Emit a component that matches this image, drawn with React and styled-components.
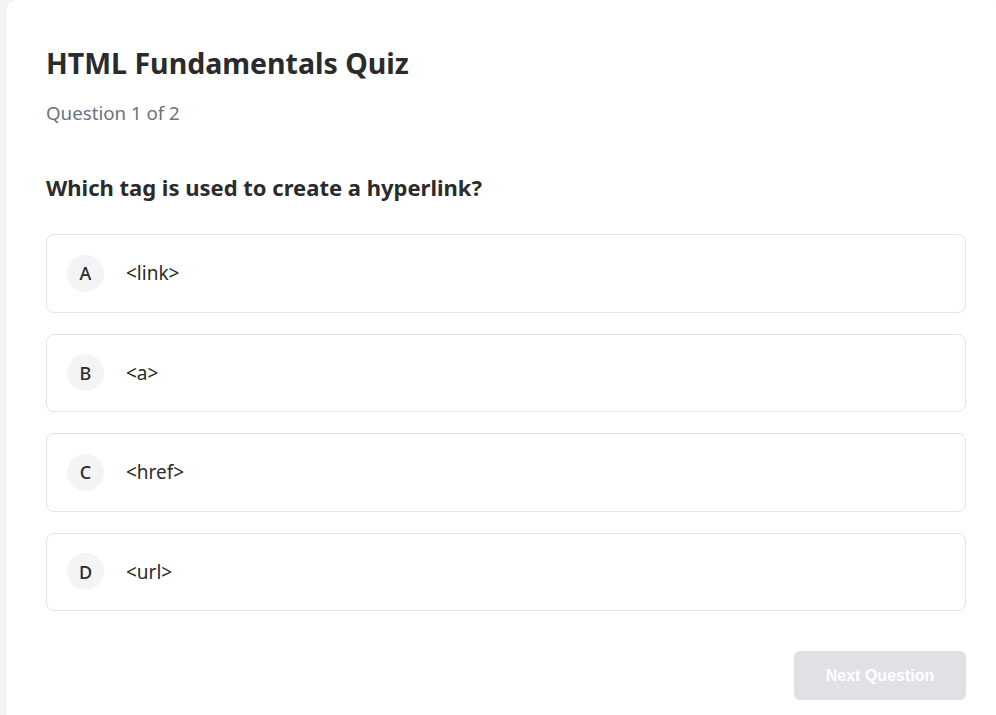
import styled, { createGlobalStyle } from 'styled-components';

const GlobalStyle = createGlobalStyle`
  html, body {
    margin: 0;
    padding: 0;
    background: #f3f4f6;
    overflow: hidden;
  }
  body {
    font-family: "Noto Sans", "Open Sans", sans-serif;
    color: #2d2d2d;
  }
`;

const Page = styled.div`
  padding-left: 6px;
  min-height: 715px;
`;

const Card = styled.div`
  width: 1000px;
  min-height: 715px;
  box-sizing: border-box;
  background: #ffffff;
  border-radius: 12px;
  padding: 45px 40px 40px 40px;
  box-shadow: 0 1px 3px rgba(0, 0, 0, 0.06);
`;

const Title = styled.h1`
  margin: 0;
  font-size: 28.5px;
  font-weight: 700;
  line-height: 1.3;
  color: #2b2b2b;
`;

const Counter = styled.p`
  margin: 18px 0 0;
  font-size: 18.7px;
  color: #6b7280;
`;

const Question = styled.h2`
  margin: 47px 0 0;
  font-size: 22px;
  font-weight: 700;
  color: #2b2b2b;
`;

const Options = styled.div`
  display: flex;
  flex-direction: column;
  gap: 21px;
  margin-top: 32px;
`;

const Option = styled.button`
  display: flex;
  align-items: center;
  gap: 22px;
  width: 100%;
  padding: 19.75px 20px;
  background: #ffffff;
  border: 1px solid #e2e4e8;
  border-radius: 8px;
  font-family: inherit;
  font-size: 19px;
  color: #2b2b2b;
  text-align: left;
  cursor: pointer;
`;

const Letter = styled.span`
  display: flex;
  align-items: center;
  justify-content: center;
  width: 37px;
  height: 37px;
  border-radius: 50%;
  background: #f3f4f6;
  font-weight: 500;
  font-size: 18px;
`;

const Footer = styled.div`
  display: flex;
  justify-content: flex-end;
  margin-top: 40px;
`;

const NextButton = styled.button`
  width: 172px;
  height: 49px;
  border: none;
  border-radius: 6px;
  background: #dfe1e5;
  color: #ffffff;
  font-family: "Liberation Sans", Arial, sans-serif;
  font-weight: 700;
  font-size: 16px;
  cursor: not-allowed;
`;

const options = [
  { key: 'A', text: '<link>' },
  { key: 'B', text: '<a>' },
  { key: 'C', text: '<href>' },
  { key: 'D', text: '<url>' },
];

const App = () => {
  return (
    <Page>
      <GlobalStyle />
      <Card>
        <Title>HTML Fundamentals Quiz</Title>
        <Counter>Question 1 of 2</Counter>
        <Question>Which tag is used to create a hyperlink?</Question>
        <Options>
          {options.map((o) => (
            <Option key={o.key}>
              <Letter>{o.key}</Letter>
              {o.text}
            </Option>
          ))}
        </Options>
        <Footer>
          <NextButton disabled>Next Question</NextButton>
        </Footer>
      </Card>
    </Page>
  );
};

export default App;
